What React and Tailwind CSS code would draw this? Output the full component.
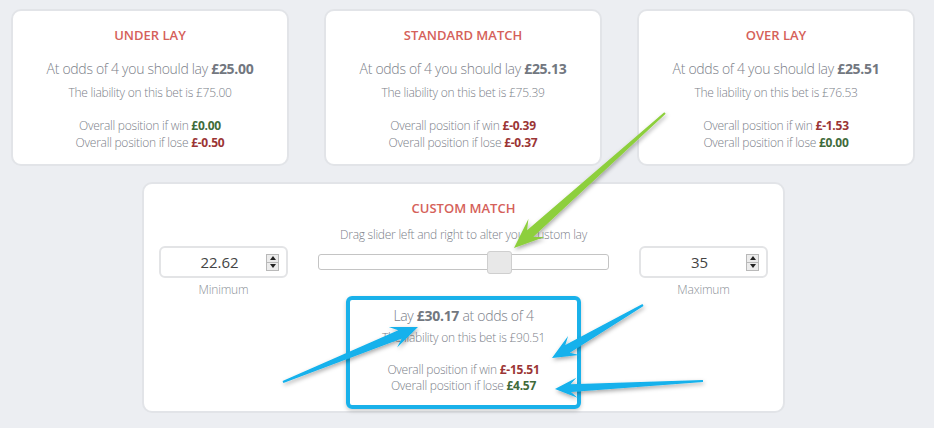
import React from 'react';

const cards = [
  { title: 'UNDER LAY', lay: '£25.00', liability: '£75.00', win: '£0.00', winUp: true, lose: '£-0.50', loseUp: false },
  { title: 'STANDARD MATCH', lay: '£25.13', liability: '£75.39', win: '£-0.39', winUp: false, lose: '£-0.37', loseUp: false },
  { title: 'OVER LAY', lay: '£25.51', liability: '£76.53', win: '£-1.53', winUp: false, lose: '£0.00', loseUp: true },
];

function Amount({ value, up }) {
  return <b className={up ? 'font-bold text-[#3f6b3b]' : 'font-bold text-[#9b3535]'}>{value}</b>;
}

function ResultCard({ card }) {
  return (
    <div className="w-[278px] h-[157px] bg-white rounded-[10px] border-2 border-[#e2e4e8] flex flex-col items-center pt-[15px] font-light">
      <div className="text-[13px] font-semibold text-[#d5615a] leading-[18px]">{card.title}</div>
      <div className="mt-[15px] text-[14px] leading-[20px] tracking-[-0.3px] text-[#7b8089]">
        At odds of 4 you should lay <b className="font-bold text-[#727780]">{card.lay}</b>
      </div>
      <div className="mt-[6px] text-[12px] leading-[16px] tracking-[-0.25px] text-[#7b8089]">The liability on this bet is {card.liability}</div>
      <div className="mt-[16px] text-[12px] leading-[17px] tracking-[-0.25px] text-[#7b8089] text-center">
        <div>Overall position if win <Amount value={card.win} up={card.winUp} /></div>
        <div>Overall position if lose <Amount value={card.lose} up={card.loseUp} /></div>
      </div>
    </div>
  );
}

function Spinner() {
  return (
    <div className="w-[13px] h-[17px] border border-[#b9b9b9] bg-[#ececec] flex flex-col">
      <div className="flex-1 flex items-center justify-center border-b border-[#b9b9b9]">
        <div className="w-0 h-0 border-l-[3px] border-r-[3px] border-b-[4px] border-l-transparent border-r-transparent border-b-[#222]" />
      </div>
      <div className="flex-1 flex items-center justify-center">
        <div className="w-0 h-0 border-l-[3px] border-r-[3px] border-t-[4px] border-l-transparent border-r-transparent border-t-[#222]" />
      </div>
    </div>
  );
}

function NumberBox({ value, label }) {
  return (
    <div className="w-[129px] flex flex-col items-center">
      <div className="w-full h-[32px] rounded-[6px] border-2 border-[#e3e4e6] bg-white flex items-center pl-[8px] pr-[7px]">
        <div className="flex-1 text-center text-[15px] font-normal text-[#444] pl-[4px]">{value}</div>
        <Spinner />
      </div>
      <div className="mt-[4px] text-[12px] leading-[16px] tracking-[-0.2px] text-[#8a8f96] font-light">{label}</div>
    </div>
  );
}

function arrowPoints(tail, tip, L, W, w1, w0) {
  const dx = tip[0] - tail[0];
  const dy = tip[1] - tail[1];
  const len = Math.hypot(dx, dy);
  const d = [dx / len, dy / len];
  const n = [-d[1], d[0]];
  const at = (p, a, b) => [p[0] + d[0] * a + n[0] * b, p[1] + d[1] * a + n[1] * b];
  const pts = [
    at(tail, 0, w0),
    at(tip, -L * 0.72, w1),
    at(tip, -L, W),
    tip,
    at(tip, -L, -W),
    at(tip, -L * 0.72, -w1),
    at(tail, 0, -w0),
  ];
  return pts.map((p) => p[0].toFixed(1) + ',' + p[1].toFixed(1)).join(' ');
}

function Arrows() {
  return (
    <svg className="absolute inset-0 pointer-events-none" width="934" height="428" viewBox="0 0 934 428">
      <defs>
        <filter id="sh" x="-20%" y="-20%" width="140%" height="140%">
          <feDropShadow dx="1" dy="2" stdDeviation="2" floodColor="#000" floodOpacity="0.35" />
        </filter>
      </defs>
      <g filter="url(#sh)">
        <polygon fill="#8dcf3c" points={arrowPoints([665, 113], [514, 248], 30, 12, 4.5, 1)} />
        <polygon fill="#12b1ec" points={arrowPoints([283, 382], [418, 327], 27, 11, 4.5, 1)} />
        <polygon fill="#12b1ec" points={arrowPoints([643, 305], [552, 358], 25, 11, 4.5, 1)} />
        <polygon fill="#12b1ec" points={arrowPoints([703, 381], [555, 389], 22, 10, 4, 1)} />
      </g>
    </svg>
  );
}

export default function App() {
  return (
    <div className="relative w-[934px] h-[428px] bg-[#eceef2] overflow-hidden" style={{ fontFamily: '"Open Sans", "Liberation Sans", sans-serif' }}>
      <div className="flex gap-[35px] pl-[11px] pt-[9px]">
        {cards.map((c) => (
          <ResultCard key={c.title} card={c} />
        ))}
      </div>

      <div className="ml-[142px] mt-[16px] w-[643px] h-[231px] bg-white rounded-[10px] border-2 border-[#e2e4e8] flex flex-col items-center pt-[15px] font-light">
        <div className="text-[13px] font-semibold text-[#d5615a] leading-[18px]">CUSTOM MATCH</div>
        <div className="mt-[10px] text-[12px] leading-[16px] tracking-[-0.25px] text-[#7b8089]">Drag slider left and right to alter your custom lay</div>
        <div className="w-full flex items-start justify-between px-[15px] mt-[3px]">
          <NumberBox value="22.62" label="Minimum" />
          <div className="relative w-[291px] h-[16px] mt-[8px] rounded-[3px] border border-[#c4c4c4] bg-white">
            <div className="absolute left-[168px] top-[-4px] w-[25px] h-[23px] rounded-[3px] border border-[#cfcfcf] bg-[#e8e8e8]" />
          </div>
          <NumberBox value="35" label="Maximum" />
        </div>
        <div className="mt-[-2px] w-[235px] h-[113px] rounded-[6px] border-4 border-[#19b1ea] flex flex-col items-center pt-[6px] shadow-[0_2px_4px_rgba(0,0,0,0.2)]">
          <div className="text-[14px] leading-[20px] tracking-[-0.3px] text-[#7b8089]">
            Lay <b className="font-bold text-[#727780]">£30.17</b> at odds of 4
          </div>
          <div className="mt-[4px] text-[12px] leading-[16px] tracking-[-0.25px] text-[#7b8089]">The liability on this bet is £90.51</div>
          <div className="mt-[16px] text-[12px] leading-[16px] tracking-[-0.25px] text-[#7b8089] text-center">
            <div>Overall position if win <Amount value="£-15.51" up={false} /></div>
            <div>Overall position if lose <Amount value="£4.57" up={true} /></div>
          </div>
        </div>
      </div>

      <Arrows />
    </div>
  );
}
